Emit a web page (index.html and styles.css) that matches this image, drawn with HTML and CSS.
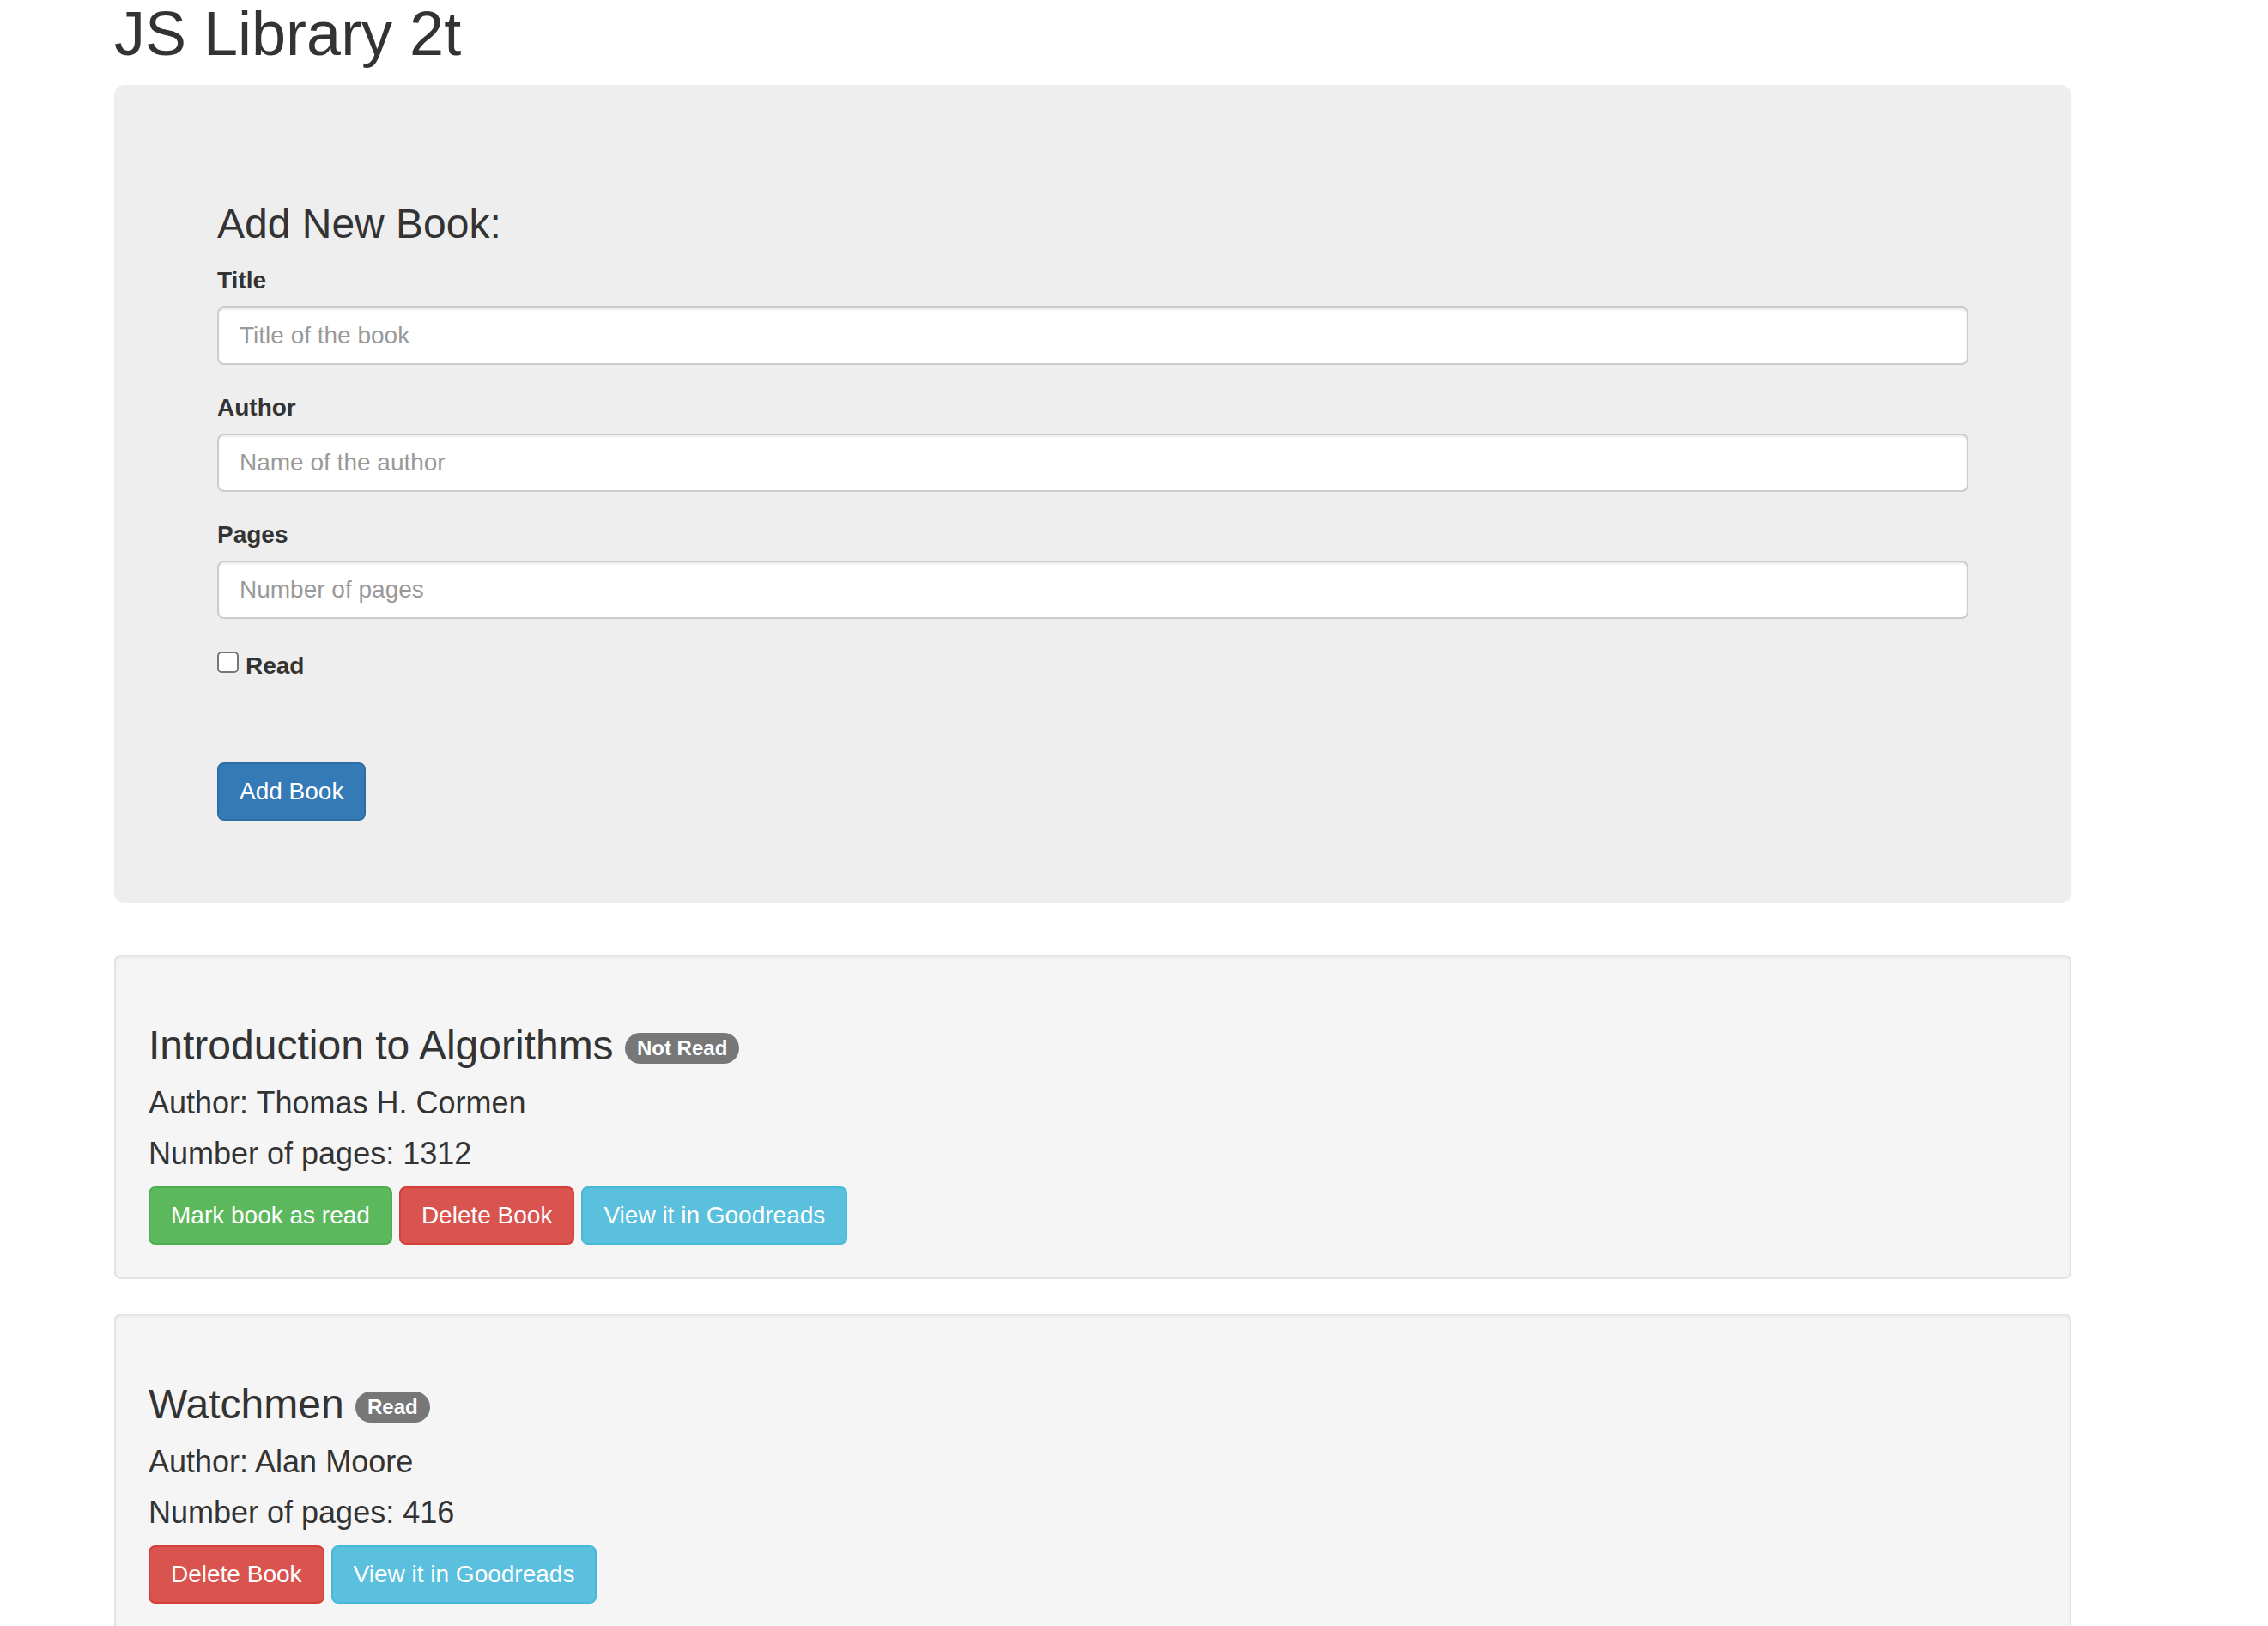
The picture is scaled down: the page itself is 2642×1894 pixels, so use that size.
FILE: index.html
```html
<!DOCTYPE html>
<html lang="en">
<head>
<meta charset="utf-8">
<title>JS Library 2t</title>
<link rel="stylesheet" href="styles.css">
</head>
<body>
<div class="page">
  <h1 class="page-title">JS Library 2t</h1>

  <div class="jumbotron">
    <form class="book-form">
      <h3 class="form-heading">Add New Book:</h3>
      <div class="form-group">
        <label class="field-label" for="title">Title</label>
        <input class="form-control" id="title" type="text" placeholder="Title of the book">
      </div>
      <div class="form-group">
        <label class="field-label" for="author">Author</label>
        <input class="form-control" id="author" type="text" placeholder="Name of the author">
      </div>
      <div class="form-group">
        <label class="field-label" for="pages">Pages</label>
        <input class="form-control" id="pages" type="number" placeholder="Number of pages">
      </div>
      <div class="check-row">
        <input class="check" id="read" type="checkbox">
        <label class="check-label" for="read">Read</label>
      </div>
      <div class="btn-row">
        <button type="button" class="btn btn-primary">Add Book</button>
      </div>
    </form>
  </div>

  <div class="well">
    <h3 class="book-title">Introduction to Algorithms <span class="badge">Not Read</span></h3>
    <h4 class="book-meta">Author: Thomas H. Cormen</h4>
    <h4 class="book-meta book-meta-last">Number of pages: 1312</h4>
    <div class="btn-row">
      <button type="button" class="btn btn-success">Mark book as read</button>
      <button type="button" class="btn btn-danger">Delete Book</button>
      <button type="button" class="btn btn-info">View it in Goodreads</button>
    </div>
  </div>

  <div class="well">
    <h3 class="book-title">Watchmen <span class="badge">Read</span></h3>
    <h4 class="book-meta">Author: Alan Moore</h4>
    <h4 class="book-meta book-meta-last">Number of pages: 416</h4>
    <div class="btn-row">
      <button type="button" class="btn btn-danger">Delete Book</button>
      <button type="button" class="btn btn-info">View it in Goodreads</button>
    </div>
  </div>
</div>
</body>
</html>
```

FILE: styles.css
```css
* {
  box-sizing: border-box;
}

html, body {
  margin: 0;
  padding: 0;
  background: #fff;
}

body {
  font-family: "Liberation Sans", Arial, Helvetica, sans-serif;
  font-size: 28px;
  line-height: 40px;
  color: #333;
}

.page {
  width: 2280px;
  margin-left: 133px;
}

.page-title {
  margin: 0 0 20px;
  font-size: 72px;
  font-weight: 400;
  line-height: 79.2px;
  color: #333;
}

.jumbotron {
  background: #eee;
  border-radius: 12px;
  padding: 96px 120px;
  margin-bottom: 60px;
}

.form-heading {
  margin: 40px 0 19px;
  font-size: 48px;
  font-weight: 400;
  line-height: 52.8px;
}

.form-group {
  margin-bottom: 30px;
}

.field-label {
  display: inline-block;
  margin-bottom: 10px;
  font-weight: 700;
}

.form-control {
  display: block;
  width: 100%;
  height: 68px;
  padding: 12px 24px;
  font-family: inherit;
  font-size: 28px;
  line-height: 40px;
  color: #555;
  background: #fff;
  border: 2px solid #ccc;
  border-radius: 8px;
  box-shadow: inset 0 2px 2px rgba(0, 0, 0, 0.075);
  outline: none;
  -moz-appearance: textfield;
}

.form-control::-webkit-outer-spin-button,
.form-control::-webkit-inner-spin-button {
  -webkit-appearance: none;
  margin: 0;
}

.form-control::placeholder {
  color: #999;
}

.check-row {
  display: flex;
  align-items: flex-start;
  margin-bottom: 92px;
}

.check {
  -webkit-appearance: none;
  appearance: none;
  width: 25px;
  height: 25px;
  margin: 8px 0 0;
  background: #fff;
  border: 2px solid #767676;
  border-radius: 5px;
}

.check-label {
  display: block;
  margin: 5px 0 0 8px;
  font-weight: 700;
  line-height: 40px;
}

.btn-row {
  display: flex;
  gap: 8px;
}

.btn {
  display: inline-block;
  padding: 12px 24px;
  font-family: inherit;
  font-size: 28px;
  font-weight: 400;
  line-height: 40px;
  color: #fff;
  border: 2px solid transparent;
  border-radius: 8px;
  cursor: pointer;
  white-space: nowrap;
}

.btn-primary {
  background: #337ab7;
  border-color: #2e6da4;
}

.btn-success {
  background: #5cb85c;
  border-color: #4cae4c;
}

.btn-danger {
  background: #d9534f;
  border-color: #d43f3a;
}

.btn-info {
  background: #5bc0de;
  border-color: #46b8da;
}

.well {
  background: #f5f5f5;
  border: 2px solid #e3e3e3;
  border-radius: 8px;
  padding: 38px;
  margin-bottom: 40px;
  box-shadow: inset 0 2px 2px rgba(0, 0, 0, 0.05);
}

.book-title {
  margin: 40px 0 20px;
  font-size: 48px;
  font-weight: 400;
  line-height: 52.8px;
}

.book-meta {
  margin: 20px 0;
  font-size: 36px;
  font-weight: 400;
  line-height: 39.6px;
}

.book-meta-last {
  margin-bottom: 18px;
}

.badge {
  display: inline-block;
  padding: 6px 14px;
  font-size: 24px;
  font-weight: 700;
  line-height: 24px;
  color: #fff;
  text-align: center;
  white-space: nowrap;
  vertical-align: middle;
  background: #777;
  border-radius: 20px;
}
```
